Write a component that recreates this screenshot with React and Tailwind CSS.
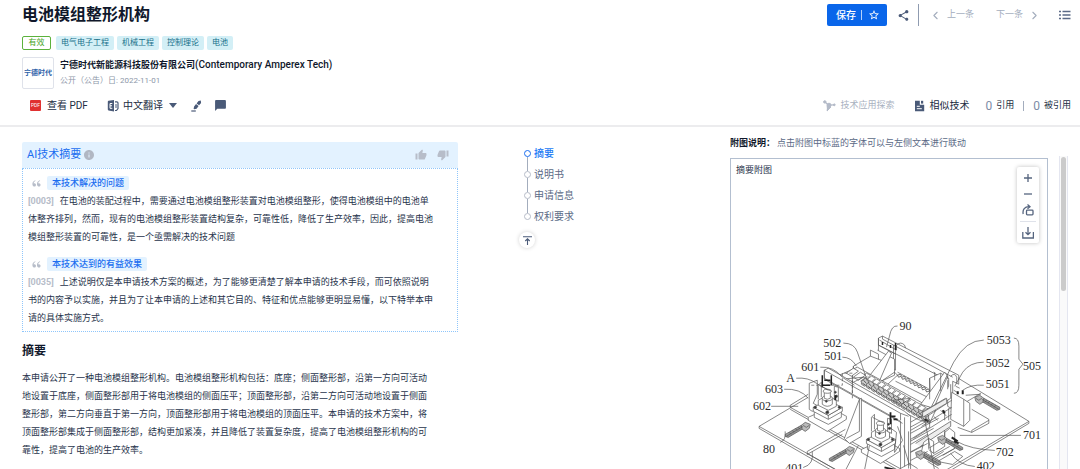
import React from 'react'
import {
    MdShare,
    MdStarBorder,
    MdThumbUp,
    MdThumbDown,
    MdInfo,
    MdChatBubble,
} from 'react-icons/md'
import { RiDoubleQuotesL } from 'react-icons/ri'
import { ChevronLeft, ChevronRight } from 'lucide-react'

const tags = ['电气电子工程', '机械工程', '控制理论', '电池']

const findings = [
    {
        title: '本技术解决的问题',
        para: '[0003]',
        lines: [
            '在电池的装配过程中，需要通过电池模组整形装置对电池模组整形，使得电池模组中的电池单',
            '体整齐排列，然而，现有的电池模组整形装置结构复杂，可靠性低，降低了生产效率，因此，提高电池',
            '模组整形装置的可靠性，是一个亟需解决的技术问题',
        ],
    },
    {
        title: '本技术达到的有益效果',
        para: '[0035]',
        lines: [
            '上述说明仅是本申请技术方案的概述，为了能够更清楚了解本申请的技术手段，而可依照说明',
            '书的内容予以实施，并且为了让本申请的上述和其它目的、特征和优点能够更明显易懂，以下特举本申',
            '请的具体实施方式。',
        ],
    },
]

const abstractLines = [
    '本申请公开了一种电池模组整形机构。电池模组整形机构包括：底座；侧面整形部，沿第一方向可活动',
    '地设置于底座，侧面整形部用于将电池模组的侧面压平；顶面整形部，沿第二方向可活动地设置于侧面',
    '整形部，第二方向垂直于第一方向，顶面整形部用于将电池模组的顶面压平。本申请的技术方案中，将',
    '顶面整形部集成于侧面整形部，结构更加紧凑，并且降低了装置复杂度，提高了电池模组整形机构的可',
    '靠性，提高了电池的生产效率。',
]

const sections = ['摘要', '说明书', '申请信息', '权利要求']

const TranslateIcon = () => (
    <svg viewBox="0 0 12 12" className="w-3 h-3" aria-hidden="true">
        <path d="M1.5 .8 7 0v11.6L1.5 10.400A1 1 0 0 1 .8 9.500V1.700a1 1 0 0 1 .7-.9Z" fill="#4a5a78" />
        <path d="M5.300 3.500H3v4.800h2.300M3 5.800h2" fill="none" stroke="#fff" strokeWidth="1" />
        <path d="M8 1.800h1.800a1.200 1.200 0 0 1 1.200 1.200v5.500L9.500 10.500H8" fill="none" stroke="#4a5a78" strokeWidth="1.200" />
        <path d="M9 4v4" stroke="#4a5a78" strokeWidth="1" />
    </svg>
)

const HighlightIcon = () => (
    <svg viewBox="0 0 11 12" className="w-[11px] h-3" aria-hidden="true">
        <path d="M7.500 1 9.800 .6l.3 2.300-2 2.400-2.500-1.900Z M5 4l2.600 2-2 2.700-2.400.6-.6-.5.500-2.400Z" fill="#4a5a78" />
        <path d="M.3 11h4.500" stroke="#4a5a78" strokeWidth="1.200" />
    </svg>
)

const ExploreIcon = () => (
    <svg viewBox="0 0 13 12" className="w-[13px] h-3" aria-hidden="true" fill="#b3bac8" stroke="#b3bac8">
        <path d="M2 2l3.500 3.200L11 4.800M5.500 5.200 4.200 11" fill="none" strokeWidth="1.300" />
        <circle cx="1.800" cy="1.900" r="1.200" />
        <circle cx="6" cy="5.200" r="2" />
        <circle cx="11.300" cy="4.800" r=".9" />
        <path d="M4.200 6 7.800 7 4.500 10.500Z" />
    </svg>
)

const SimilarIcon = () => (
    <svg viewBox="0 0 11 12" className="w-[11px] h-3" aria-hidden="true">
        <path d="M1 .8h4.800v4h4.400v6.400H1Z" fill="#4a5a78" />
        <path d="M7 .8h2.200v2.800H7Z" fill="#4a5a78" />
        <path d="M2.800 6.300h3M2.800 8.700h5" stroke="#fff" strokeWidth="1" />
    </svg>
)

const ListIcon = () => (
    <svg viewBox="0 0 12 10" className="w-3 h-[10px]" aria-hidden="true">
        <path d="M0 1.500h2M0 5h2M0 8.500h2M3.500 1.500H11.500M3.500 5H11.500M3.500 8.500H11.500" stroke="#5b6a86" strokeWidth="1.300" />
    </svg>
)

const RotateIcon = () => (
    <svg viewBox="0 0 12 12" className="w-3 h-3" fill="none" stroke="#56657f" strokeWidth="1.300" aria-hidden="true">
        <rect x="4.500" y="6.200" width="6.500" height="4.600" rx=".8" />
        <path d="M1.200 10C.3 5.500 2.800 2.700 7 2.700" />
        <path d="M5.500 .5 8 2.700 5.500 4.800" />
    </svg>
)

const DownloadIcon = () => (
    <svg viewBox="0 0 12 12" className="w-3 h-3" fill="none" stroke="#56657f" strokeWidth="1.300" aria-hidden="true">
        <path d="M.8 5v6h10.600V5M6 0v7.500M3.500 5.200 6 7.700l2.500-2.500" />
    </svg>
)

// one pressing unit on the rail
const Fixture = ({ x, y }) => (
    <g transform={`translate(${x} ${y})`} fill="#fff">
        <path d="M-19 15 0 26 19 14 3 5Z" />
        <path d="M-19 15v3L0 29l19-12v-3" />
        <path d="M-13 9v6L1 22l13-7V8L0 2Z" />
        <path d="M-14 5 1 13l14-8v4L1 17-14 9Z" />
        <path d="M-14 5 0-2 15 5 1 13Z M1 13v4" />
        <path d="M-9 3v-5L0-7 9-2v6L1 8Z" />
        <path d="M-5-4v6q5 4 10 0v-6" />
        <ellipse cx="0" cy="-4" rx="5" ry="2.500" />
        <path d="M-3-11v7q3 2 6 0v-7" />
        <ellipse cx="0" cy="-11" rx="4" ry="2" />
        <path d="M-9-3v-14l3-3v15M-8-17 4-11M7-16v13l4 2v-14Z" />
        <g fill="#333">
            <circle cx="-12" cy="5" r="1.200" />
            <circle cx="12" cy="5" r="1.200" />
            <circle cx="0" cy="10" r="1.500" />
            <circle cx="-1" cy="-1" r="1" />
            <circle cx="9" cy="-6" r="1.200" />
            <circle cx="8" cy="-10" r="1" />
        </g>
    </g>
)

const Rod = ({ x, y, flip }) => (
    <g transform={`translate(${x} ${y}) scale(${flip ? -1 : 1} 1)`}>
        <path d="M0 0 16-9l4 2L3 3 0 2Z" fill="#999" />
        <path d="M1 2 18-8M16-9l4-3 5 2-1 4-4 3-3-2Z" fill="#bbb" />
        <path d="M4-2l2 2M7-4l2 2M10-6l2 2M13-7l2 2M18-9l3 2 3-2" />
    </g>
)

const teeth = Array.from({ length: 13 }, (_, i) => i)

const PatentFigure = () => (
    <svg viewBox="731 310 315 160" className="block w-full" role="img" aria-label="摘要附图">
        <g fill="none" stroke="#555" strokeWidth=".7" strokeLinejoin="round">
            {/* base plate */}
            <path d="M808 397 759 426l78 44M759 426v2l76 44M951 374l77 47-85 50M1028 421v2l-80 48" />
            <path d="M790 407 903 470M790 407v-2l18-11M790 409l108 61M807 451l38-22M807 451v3l35-20" />
            <path d="M807 453l30 17M965 395l15-1M980 393 950 411" />

            {/* rear wall */}
            <path d="M878 338l4-2 76 39v9l-6-3v28l-5-3v-26L878 345Z" fill="#fff" />
            <path d="M878 338v19l17 13V349M882 336v3l70 38M878 345l17 9M896 350v-5M896 350l-17-10M893 345v22" />
            <path d="M870 356v-6l8 4v20l-8-4ZM877 350l17 9v16l-20 9" fill="#fff" />
            <path d="M853 366 870 356l13 5-10 14-13 4-7-5ZM853 366v5l10 6" fill="#fff" />
            <path d="M868 377 888 351l3 2-13 30Z" fill="#fff" />
            <path d="M878 383 894 372l3 3-14 13" />
            <path d="M896 345q4-4 8 0l1 3M950 376q4-4 6 1v6" />
            <path d="M882 342v3M890 345v3M895 343v7" stroke="#222" strokeWidth="1.500" />

            {/* rear chain */}
            {teeth.slice(0, 8).map((i) => (
                <path key={i} d={`M${897 + i * 4} ${375 + i * 2.1}l3-1 1 2-3 1Z`} stroke="#333" />
            ))}
            <path d="M897 372l30 16M895 381l34 17" />

            {/* long platform and clamping teeth */}
            <path d="M839 375l18-8 78 43-6 13-12-4-68-36Z" fill="#fff" />
            {teeth.map((i) => (
                <g key={i} transform={`translate(${862 + i * 5} ${376 + i * 2.900})`}>
                    <path d="M0 0l4-3 4 2-4 4Z" fill="#fff" />
                    <path d="M-1 5l4-3 3 2v4l-4 2-3-2Z" fill="#ccc" />
                    <path d="M0 7l3 2M1 4l3 3" stroke="#222" />
                </g>
            ))}
            <path d="M846 373l7-5 5 3-7 5ZM853 377l7-5 5 3-7 5ZM860 381l7-5" fill="#fff" />
            <path d="M842 379 863 377l-10 5ZM892 400l18-2-9 6Z" />

            {/* right side machinery */}
            <path d="M929 378l11-5 8 5v18l-18 11-1-29Z" fill="#fff" />
            <path d="M920 404 944 372l3 4-14 32ZM932 409l18-11v-14" fill="#fff" />
            <path d="M929 378v21M940 373v18M934 372v8M947 380v9M933 372l2 2M947 376v3" />
            <path d="M951 392l12 7v27l-13-7ZM963 399l6 4v17l-6 6M957 427l14 5 17-9v-4l-17-10" fill="#fff" />
            <path d="M971 432v-2l17-10M951 400l-26 17M951 407l-30 19M951 414l-38 24M945 398l-27 16M940 410l6 6" />
            <path d="M922 417v-5l24-14v5ZM908 423l14-8M915 443l35-22v5l-30 20" fill="#eee" />
            <path d="M908 434l30-16M906 443l27-15M909 452l15-8M904 430l22-12" />
            <path d="M923 442l5-4 5 3v12l11-7v-14l5-4 5 4v16l-24 13-10-6Z" fill="#fff" />
            <path d="M928 438v10l16-10v-8M933 453l-5-4M923 451l8 5 18-10M932 458l11-7M942 455l12-7" />
            <path d="M937 461l17-10 8 5-10 8ZM930 455l10 6M927 461l11 7" />
            <path d="M953 390l5 3M955 386l4 2M944 410v10M948 408v12M933 416l4 4" />
            <path d="M957 391v3M962 390v4M951 437l6 4M953 441l5 2M924 419l4 2M942 410l2 3" stroke="#222" strokeWidth="2" />

            {/* front wall */}
            <path d="M824 370l4-2 76 43 6 5v54h-10v-49l-76-43Z" fill="#fff" />
            <path d="M824 370l76 43v7M824 370v9l78 44M900 413l8 3M904 417v49M908 431v37" />
            <path d="M910 430 929 419v8l-19 12M910 444l17-10M910 452l17-9M910 460l17-9" />
            <path d="M844 438 859 399l2-1v38l-12 7ZM846 438l13-7V399" fill="#fff" />
            <path d="M809 409v-26l8-3v14l-4 9 7 4M809 409l3 2 10-8M852 393v-17" fill="#fff" />
            <path d="M811 385h31v-12h10v25" strokeDasharray="3 2" />
        </g>

        <g stroke="#555" strokeWidth=".7" fill="none">
            <Rod x={785} y={434} />
            <Rod x={829} y={458} />
            <Rod x={999} y={407} flip />
            <Rod x={962} y={447} flip />
            <Rod x={940} y={462} flip />
            <Fixture x={827} y={402} />
            <Fixture x={880} y={434} />
            <path d="M822 375v12M831 375v10M824 380h6M822 385h8" stroke="#222" strokeWidth="1.500" />
            <path d="M890 412v12M893 419h4M891 416h4M835 395v5M884 467l14 3" stroke="#222" strokeWidth="1.800" />
            <path d="M889 427l7 5-2 20 8-12-5-14M903 445l6 20M900 468l9-5 8 5" />

            {/* leader lines */}
            <path d="M897 326q-6-1-8 10l-3 11M843 343q11 0 14 9l10 29M842 357q9 0 14 9M820 367q13-1 22 10l12 8" />
            <path d="M796 378q12-1 20 5l12 7M784 389q16-1 24 9M771 406h27M780 442q6-2 5-11M803 467q11-3 9-16" />
            <path d="M983 340q-18 0-30 22l-22 44M983 362q-14 0-21 10l-8 14M983 385q-13-1-21 5" />
            <path d="M1013 338q5 0 5 8v13l4 5-4 5v16q0 8-5 8" />
            <path d="M1020 435h-61M994 450q-24-1-38-9M974 466q-15-1-24-13M845 470l13-25M864 470l5-25M924 419l10 51" />
        </g>

        <g fill="#2b2b2b" className="font-['Liberation_Serif',serif] text-[12px]">
            <text x="899" y="330">90</text>
            <text x="823" y="347">502</text>
            <text x="824" y="360">501</text>
            <text x="801" y="371">601</text>
            <text x="786" y="382">A</text>
            <text x="765" y="393">603</text>
            <text x="753" y="410">602</text>
            <text x="763" y="453">80</text>
            <text x="785" y="471">401</text>
            <text x="986" y="344">5053</text>
            <text x="985" y="367">5052</text>
            <text x="985" y="388">5051</text>
            <text x="1022" y="370">505</text>
            <text x="1022" y="439">701</text>
            <text x="995" y="456">702</text>
            <text x="976" y="470">402</text>
        </g>
    </svg>
)

const Header = () => (
    <header className="border-b-2 border-[#ececee] pl-[22px] pr-[9px] pb-[7px]">
        <div className="flex items-center h-[30px]">
            <h1 className="text-[16px] leading-5 font-bold text-[#10182b]">电池模组整形机构</h1>
            <div className="ml-auto flex items-center text-[9px] text-[#a3adbd]">
                <div className="flex items-center h-[22px] w-[60px] rounded-xs bg-[#0a66ea] text-white">
                    <button type="button" className="flex-1 pl-1 text-[10px] font-medium">保存</button>
                    <span className="w-px h-[10px] bg-white/70"></span>
                    <button type="button" aria-label="收藏" className="w-[25px] flex justify-center">
                        <MdStarBorder size={12} />
                    </button>
                </div>
                <button type="button" aria-label="分享" className="ml-[10px] text-[#4a5a78]">
                    <MdShare size={13} />
                </button>
                <span className="ml-2 w-px h-[22px] bg-[#8f9bb0]"></span>
                <button type="button" className="ml-[10px] flex items-center gap-[5px]">
                    <ChevronLeft size={13} />
                    上一条
                </button>
                <button type="button" className="ml-[22px] flex items-center gap-[5px]">
                    下一条
                    <ChevronRight size={13} />
                </button>
                <button type="button" aria-label="列表" className="ml-[18px]">
                    <ListIcon />
                </button>
            </div>
        </div>

        <div className="mt-[6px] flex gap-[3px] text-[8px] leading-[12px]">
            <span className="mr-[2px] w-[29px] h-[14px] rounded-xs border border-[#5cb23c] text-center text-[#46a325]">有效</span>
            {tags.map((tag) => (
                <span key={tag} className="h-[14px] rounded-xs bg-[#d3eff6] px-[5px] py-px text-[#17708a]">{tag}</span>
            ))}
        </div>

        <div className="mt-[7px] flex items-center gap-[6px]">
            <div className="w-8 h-8 rounded-xs border border-[#dfe2ea] flex items-center justify-center text-[7px] font-bold text-[#2d62a8]">
                宁德时代
            </div>
            <div>
                <p className="text-[9px] leading-4 font-bold text-[#10182b]">
                    宁德时代新能源科技股份有限公司
                    <span className="text-[10px] font-medium">(Contemporary Amperex Tech)</span>
                </p>
                <p className="text-[8px] leading-4 text-[#8d97a9]">公开（公告）日: 2022-11-01</p>
            </div>
        </div>

        <div className="mt-1 flex items-center h-[25px] text-[10px] text-[#222d42]">
            <button type="button" className="ml-2 flex items-center gap-[6px]">
                <span className="w-[11px] h-[11px] rounded-[1px] bg-[#e03131] text-white text-[5px] leading-[11px] text-center">PDF</span>
                查看 PDF
            </button>
            <button type="button" className="ml-[19px] flex items-center gap-1">
                <TranslateIcon />
                中文翻译
                <svg viewBox="0 0 8 5" className="ml-[2px] w-2 h-[5px]" fill="#4a5a78" aria-hidden="true">
                    <path d="M0 0h8L4 5Z" />
                </svg>
            </button>
            <button type="button" aria-label="高亮" className="ml-[14px]"><HighlightIcon /></button>
            <button type="button" aria-label="评论" className="ml-3 text-[#4a5a78]"><MdChatBubble size={13} /></button>

            <div className="ml-auto flex items-center">
                <button type="button" disabled className="flex items-center gap-1 text-[9px] text-[#a9b1c0]">
                    <ExploreIcon />
                    技术应用探索
                </button>
                <button type="button" className="ml-5 flex items-center gap-1">
                    <SimilarIcon />
                    相似技术
                </button>
                <a href="#cites" className="ml-4 flex items-center gap-1 text-[9px]">
                    <span className="text-[12px] text-[#7d8ca6]">0</span>引用
                </a>
                <span className="mx-[9px] w-px h-[10px] bg-[#a3adbd]"></span>
                <a href="#cited-by" className="flex items-center gap-1 text-[9px]">
                    <span className="text-[12px] text-[#7d8ca6]">0</span>被引用
                </a>
            </div>
        </div>
    </header>
)

const AiSummary = () => (
    <section>
        <div className="h-[26px] rounded-t-xs bg-[#e3f2ff] px-[5px] pr-[9px] flex items-center">
            <h2 className="text-[11px] text-[#1b6ef0]">AI技术摘要</h2>
            <MdInfo size={12} className="ml-[2px] text-[#b1b7c3]" />
            <button type="button" aria-label="有帮助" className="ml-auto text-[#b7bdc9]"><MdThumbUp size={12} /></button>
            <button type="button" aria-label="没帮助" className="ml-[10px] text-[#b7bdc9]"><MdThumbDown size={12} /></button>
        </div>
        <div className="border border-dotted border-[#8fc6fb] px-[5px] pt-[7px] pb-1 flex flex-col gap-[11px]">
            {findings.map((item) => (
                <div key={item.title}>
                    <div className="flex items-center gap-[5px] pl-[3px]">
                        <RiDoubleQuotesL size={11} className="text-[#b7bdc9]" />
                        <h3 className="h-[14px] rounded-xs bg-[#e3f2ff] px-[5px] text-[9px] leading-[14px] font-medium text-[#1b6ef0]">
                            {item.title}
                        </h3>
                    </div>
                    <p className="mt-[2px] text-[9px] leading-[18px] text-[#27334b]">
                        <span className="mr-[6px] font-bold text-[#b7bdc9]">{item.para}</span>
                        {item.lines.map((line) => (
                            <React.Fragment key={line}>{line}<br /></React.Fragment>
                        ))}
                    </p>
                </div>
            ))}
        </div>
    </section>
)

const SectionNav = () => (
    <nav className="pl-[66px] pt-4 text-[10px]">
        <ul>
            {sections.map((name, i) => (
                <li key={name} className="relative flex items-center gap-[3px] h-[21px]">
                    {i < sections.length - 1 && (
                        <span className="absolute left-[3px] top-[14px] w-px h-[14px] bg-[#a3adbd]"></span>
                    )}
                    <span className={i === 0
                        ? 'w-[7px] h-[7px] rounded-full border border-[#1b6ef0]'
                        : 'w-[7px] h-[7px] rounded-full border border-[#b7bdc9]'}
                    ></span>
                    <a href="#section" className={i === 0 ? 'font-medium text-[#1b7af5]' : 'text-[#5b6a86]'}>{name}</a>
                </li>
            ))}
        </ul>
        <button type="button" aria-label="回到顶部" className="-ml-[5px] mt-[5px] w-4 h-4 rounded-full bg-white shadow-[0_0_4px_#0000002e] flex items-center justify-center">
            <svg viewBox="0 0 9 9" className="w-[9px] h-[9px]" fill="none" stroke="#4a5a78" strokeWidth="1.100" aria-hidden="true">
                <path d="M0 .8h9M4.500 9V3M2.300 5l2.200-2.200L6.700 5" />
            </svg>
        </button>
    </nav>
)

const FigurePanel = () => (
    <aside className="pt-2 pr-3 flex flex-col min-h-0 text-[9px]">
        <p className="leading-4 text-[#5b6a86]">
            <strong className="mr-[2px] text-[#10182b]">附图说明：</strong>
            点击附图中标蓝的字体可以与左侧文本进行联动
        </p>
        <div className="mt-[5px] flex gap-[11px] flex-1 min-h-0">
            <div className="relative mt-[2px] flex-1 border border-b-0 border-[#b3bfd0] pt-[3px]">
                <h2 className="px-[5px] leading-4 text-[#27334b]">摘要附图</h2>
                <div className="mt-[132px]">
                    <PatentFigure />
                </div>
                <div className="absolute right-2 top-2 w-[22px] rounded-xs bg-white shadow-[0_0_4px_#00000040] flex flex-col items-center">
                    <button type="button" aria-label="放大" className="h-[22px]">
                        <svg viewBox="0 0 8 8" className="w-2 h-2" stroke="#56657f" strokeWidth="1.300" aria-hidden="true"><path d="M0 4h8M4 0v8" /></svg>
                    </button>
                    <button type="button" aria-label="缩小" className="h-[10px]">
                        <svg viewBox="0 0 8 8" className="w-2 h-2" stroke="#56657f" strokeWidth="1.300" aria-hidden="true"><path d="M0 4h8" /></svg>
                    </button>
                    <button type="button" aria-label="旋转" className="h-[22px]"><RotateIcon /></button>
                    <span className="w-4 h-px bg-[#dfe2ea]"></span>
                    <button type="button" aria-label="下载" className="h-[21px]"><DownloadIcon /></button>
                </div>
            </div>
            <div className="w-[9px] border-x border-[#e4e6f0] bg-[#fafafa] px-px pt-px">
                <div className="h-[134px] rounded-full bg-[#cbcbcb]"></div>
            </div>
        </div>
    </aside>
)

const App = () => {
    return (
        <div className="h-screen flex flex-col overflow-hidden bg-white font-[Roboto,'Noto_Sans_CJK_SC',sans-serif] whitespace-nowrap">
            <Header />
            <main className="flex-1 min-h-0 grid grid-cols-[458fr_272fr_350fr] grid-rows-[minmax(0,1fr)]">
                <div className="pl-[22px] pt-[15px]">
                    <AiSummary />
                    <h2 className="mt-[9px] text-[12px] leading-5 font-bold text-[#10182b]">摘要</h2>
                    <p className="mt-2 text-[9px] leading-[18px] text-[#27334b]">
                        {abstractLines.map((line) => (
                            <React.Fragment key={line}>{line}<br /></React.Fragment>
                        ))}
                    </p>
                </div>
                <SectionNav />
                <FigurePanel />
            </main>
        </div>
    )
}

export default App
